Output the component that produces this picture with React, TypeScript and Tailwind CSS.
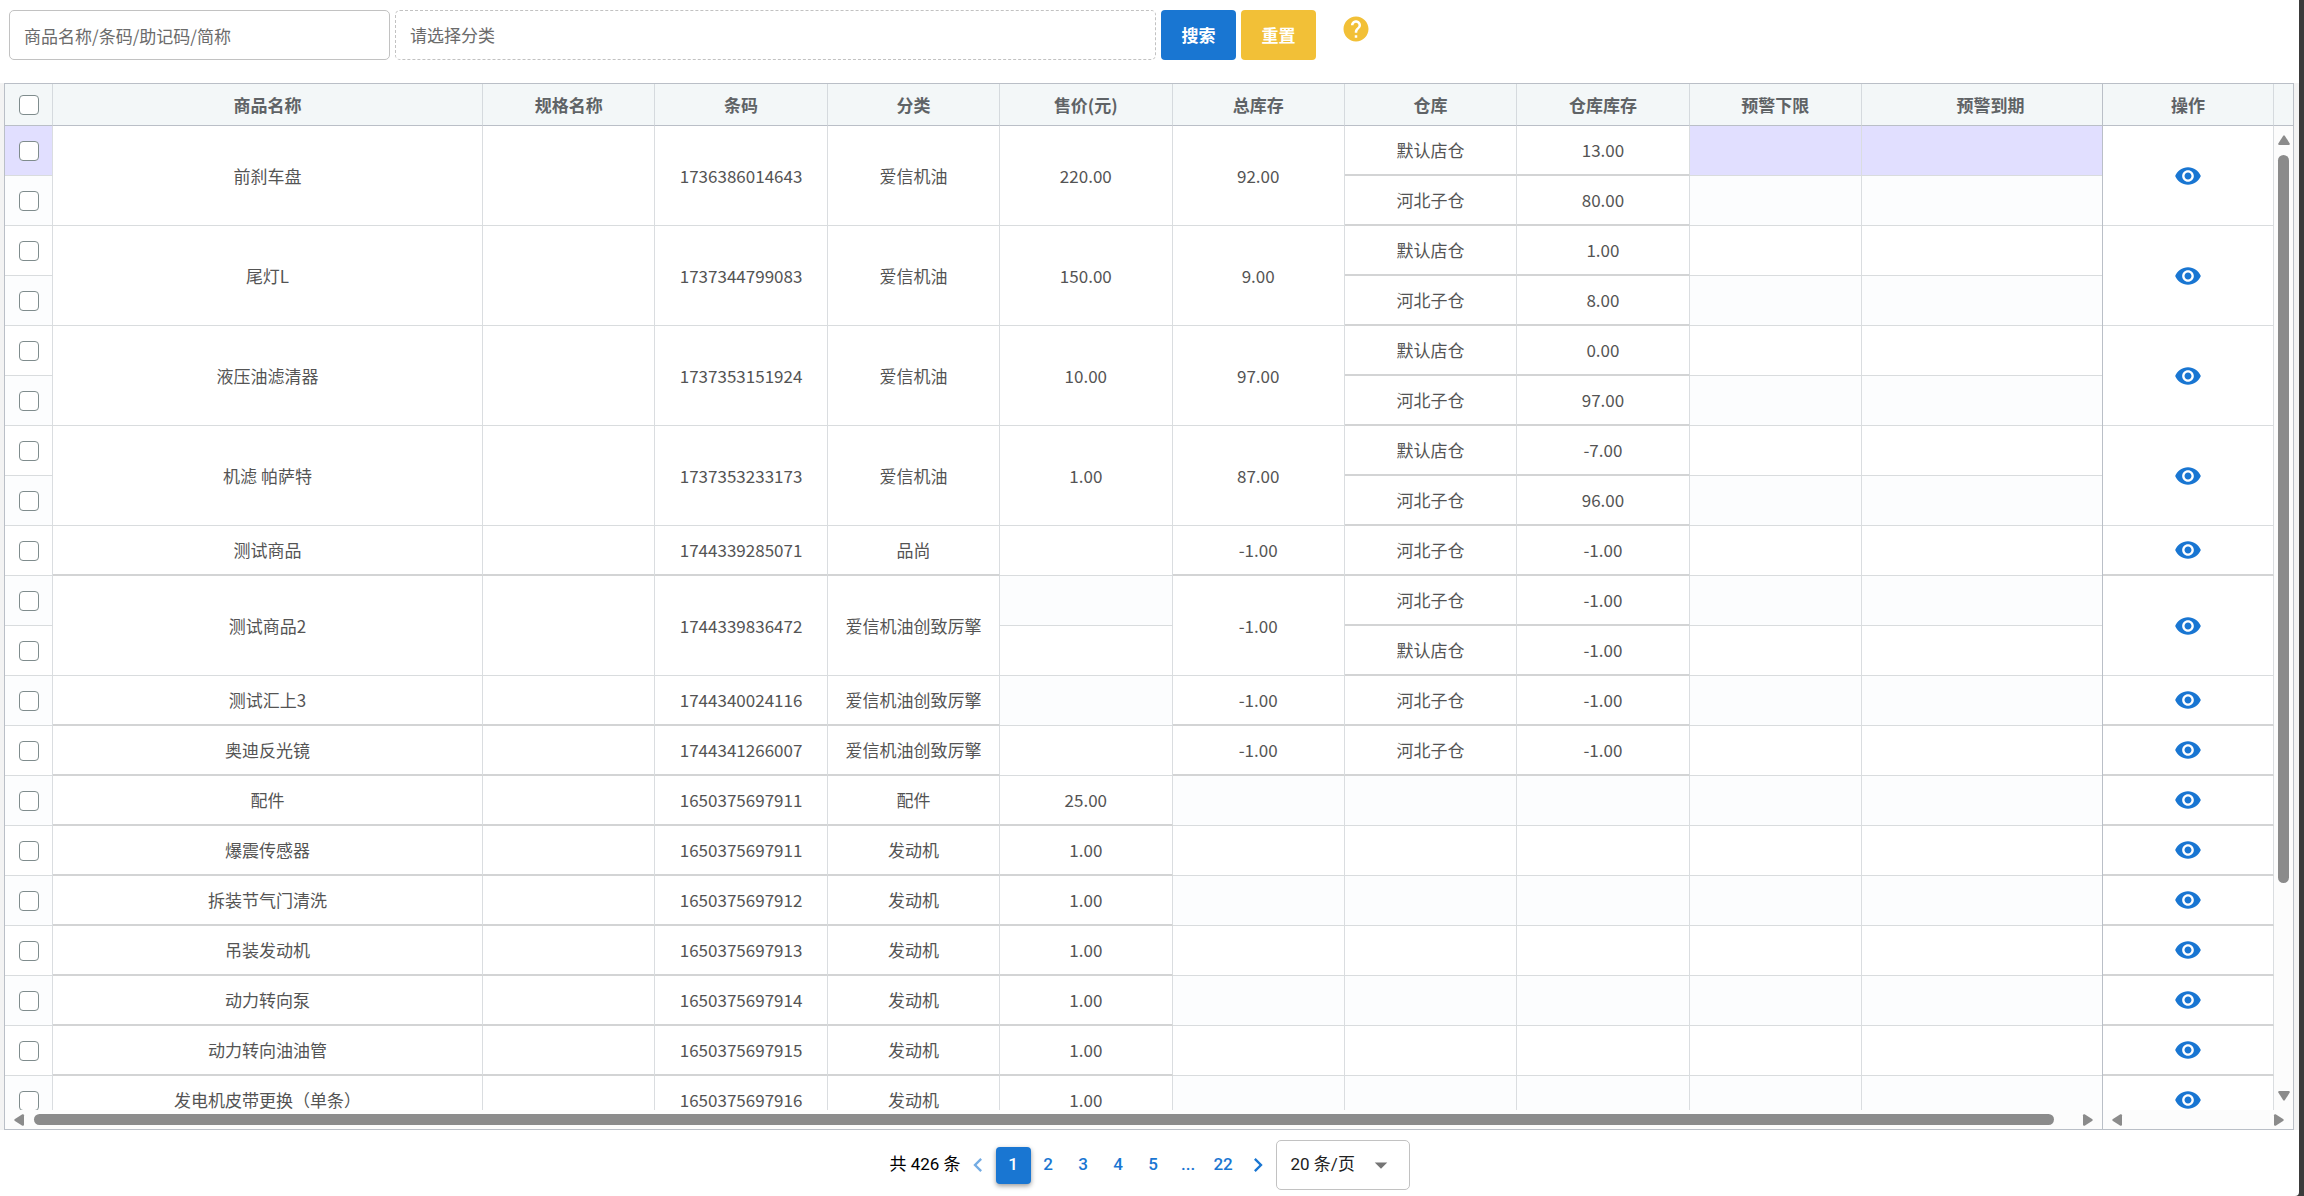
import clsx from "clsx";
import { MdHelp, MdVisibility, MdChevronLeft, MdChevronRight, MdArrowDropDown } from "react-icons/md";

type Stock = { name: string; qty: string };

type Product = {
  name: string;
  code: string;
  category: string;
  price?: string;
  total?: string;
  stocks: Stock[];
};

const MAIN = "默认店仓";
const SUB = "河北子仓";

const products: Product[] = [
  { name: "前刹车盘", code: "1736386014643", category: "爱信机油", price: "220.00", total: "92.00", stocks: [{ name: MAIN, qty: "13.00" }, { name: SUB, qty: "80.00" }] },
  { name: "尾灯L", code: "1737344799083", category: "爱信机油", price: "150.00", total: "9.00", stocks: [{ name: MAIN, qty: "1.00" }, { name: SUB, qty: "8.00" }] },
  { name: "液压油滤清器", code: "1737353151924", category: "爱信机油", price: "10.00", total: "97.00", stocks: [{ name: MAIN, qty: "0.00" }, { name: SUB, qty: "97.00" }] },
  { name: "机滤 帕萨特", code: "1737353233173", category: "爱信机油", price: "1.00", total: "87.00", stocks: [{ name: MAIN, qty: "-7.00" }, { name: SUB, qty: "96.00" }] },
  { name: "测试商品", code: "1744339285071", category: "品尚", total: "-1.00", stocks: [{ name: SUB, qty: "-1.00" }] },
  { name: "测试商品2", code: "1744339836472", category: "爱信机油创致厉擎", total: "-1.00", stocks: [{ name: SUB, qty: "-1.00" }, { name: MAIN, qty: "-1.00" }] },
  { name: "测试汇上3", code: "1744340024116", category: "爱信机油创致厉擎", total: "-1.00", stocks: [{ name: SUB, qty: "-1.00" }] },
  { name: "奥迪反光镜", code: "1744341266007", category: "爱信机油创致厉擎", total: "-1.00", stocks: [{ name: SUB, qty: "-1.00" }] },
  { name: "配件", code: "1650375697911", category: "配件", price: "25.00", stocks: [] },
  { name: "爆震传感器", code: "1650375697911", category: "发动机", price: "1.00", stocks: [] },
  { name: "拆装节气门清洗", code: "1650375697912", category: "发动机", price: "1.00", stocks: [] },
  { name: "吊装发动机", code: "1650375697913", category: "发动机", price: "1.00", stocks: [] },
  { name: "动力转向泵", code: "1650375697914", category: "发动机", price: "1.00", stocks: [] },
  { name: "动力转向油油管", code: "1650375697915", category: "发动机", price: "1.00", stocks: [] },
  { name: "发电机皮带更换（单条）", code: "1650375697916", category: "发动机", price: "1.00", stocks: [] },
];

// one line per warehouse; products without stock still take one line
const lines = products.flatMap((product) => {
  const span = Math.max(product.stocks.length, 1);
  return Array.from({ length: span }, (_, i) => ({ product, span, first: i === 0, stock: product.stocks[i] }));
});

const headers = ["商品名称", "规格名称", "条码", "分类", "售价(元)", "总库存", "仓库", "仓库库存", "预警下限", "预警到期"];
const pages = ["2", "3", "4", "5", "...", "22"];

function Cell({ value, span = 1, filled = true }: { value?: string; span?: number; filled?: boolean }) {
  return (
    <td
      rowSpan={span}
      className={clsx(
        "border-r border-r-[#dadde0] p-0 text-center whitespace-nowrap",
        filled && "bg-white",
        filled && span === 1 ? "border-b-2 border-b-[#d3d4d5]" : "border-b border-b-[#d9dcde]",
      )}
    >
      {value}
    </td>
  );
}

function HeadCell({ title }: { title: string }) {
  return <th className="border-r border-b border-r-[#d5dade] border-b-[#babfc7] p-0 font-bold">{title}</th>;
}

function Check({ label }: { label: string }) {
  return (
    <input
      type="checkbox"
      aria-label={label}
      className="block mx-auto size-5 appearance-none rounded-[4px] border border-[#7f8c8d] bg-white"
    />
  );
}

function Arrow({ className }: { className?: string }) {
  return (
    <svg viewBox="0 0 12 12" className={clsx("size-3 shrink-0 fill-[#8b8b8b]", className)}>
      <path d="M5.1 1.9Q6 .6 6.9 1.9L11.7 9.4Q12.2 10.8 10.8 11H1.2Q-.2 10.8.3 9.4Z" />
    </svg>
  );
}

function Toolbar() {
  return (
    <form className="flex items-start px-[9px] pt-[10px] pb-[23px]" onSubmit={(e) => e.preventDefault()}>
      <input
        type="text"
        aria-label="商品名称"
        placeholder="商品名称/条码/助记码/简称"
        className="h-[50px] w-[381px] rounded-[5px] border border-[#c2c2c2] px-[14px] text-[17px] placeholder:text-[#6b6b6b]"
      />
      <select
        aria-label="分类"
        className="ml-[5px] h-[50px] w-[761px] appearance-none rounded-[5px] border border-dashed border-[#c2c2c2] bg-white px-[14px] text-[17px] text-[#6b6b6b]"
      >
        <option>请选择分类</option>
      </select>
      <button className="ml-[5px] h-[50px] w-[75px] rounded-[4px] bg-[#1976d2] text-[17px] font-bold text-white">搜索</button>
      <button type="reset" className="ml-[5px] h-[50px] w-[75px] rounded-[4px] bg-[#f2c037] text-[17px] font-bold text-white">
        重置
      </button>
      <button type="button" aria-label="帮助" className="ml-[25px] mt-1">
        <MdHelp className="size-[30px] text-[#f2c037]" />
      </button>
    </form>
  );
}

function MainTable() {
  return (
    <table className="w-[calc(100%+18px)] table-fixed border-separate border-spacing-0">
      <colgroup>
        <col className="w-[48px]" />
        <col className="w-[430px]" />
        <col span={8} />
        <col className="w-[258px]" />
      </colgroup>
      <thead>
        <tr className="h-[42px] bg-[#f3f7f8] text-[#5f6366]">
          <th className="border-r border-b border-r-[#d5dade] border-b-[#babfc7] p-0">
            <Check label="全选" />
          </th>
          {headers.map((title) => (
            <HeadCell key={title} title={title} />
          ))}
        </tr>
      </thead>
      <tbody>
        {lines.map(({ product, span, first, stock }, i) => (
          <tr key={i} className={clsx("h-[50px]", i === 0 ? "bg-[#e1dfff]" : i % 2 ? "bg-[#fcfdfe]" : "bg-white")}>
            <td className="border-r border-b border-r-[#dadde0] border-b-[#d9dcde] p-0">
              <Check label={product.name} />
            </td>
            {first && (
              <>
                <Cell value={product.name} span={span} />
                <Cell span={span} />
                <Cell value={product.code} span={span} />
                <Cell value={product.category} span={span} />
              </>
            )}
            {product.price ? first && <Cell value={product.price} span={span} /> : <Cell filled={false} />}
            {product.total ? first && <Cell value={product.total} span={span} /> : <Cell filled={false} />}
            <Cell value={stock?.name} filled={!!stock} />
            <Cell value={stock?.qty} filled={!!stock} />
            <Cell filled={false} />
            <Cell filled={false} />
          </tr>
        ))}
      </tbody>
    </table>
  );
}

function ActionTable() {
  return (
    <table className="w-full table-fixed border-separate border-spacing-0">
      <thead>
        <tr className="h-[42px] bg-[#f3f7f8] text-[#5f6366]">
          <HeadCell title="操作" />
        </tr>
      </thead>
      <tbody>
        {lines.map(({ product, span, first }, i) => (
          <tr key={i} className="h-[50px]">
            {first && (
              <td
                rowSpan={span}
                className={clsx(
                  "border-r border-r-[#dadde0] p-0",
                  span === 1 ? "border-b-2 border-b-[#d3d4d5]" : "border-b border-b-[#d9dcde]",
                )}
              >
                <button aria-label={`查看${product.name}`} className="block mx-auto">
                  <MdVisibility className="size-7 text-[#1976d2]" />
                </button>
              </td>
            )}
          </tr>
        ))}
      </tbody>
    </table>
  );
}

function Grid() {
  return (
    <div className="flex min-h-0 flex-1 bg-[#f3f3f3] pr-[5px] pl-1">
      <div className="flex min-w-0 flex-1 border border-[#babfc7] bg-white text-[17px] text-[#545454]">
        <div className="flex min-w-0 flex-1 flex-col">
          <div className="min-h-0 flex-1 overflow-hidden">
            <MainTable />
          </div>
          <div className="flex h-[19px] shrink-0 items-center bg-[#fcfcfc] px-2">
            <Arrow className="-rotate-90" />
            <div className="mr-[28px] ml-[9px] h-[11px] flex-1 rounded-full bg-[#8b8b8b]" />
            <Arrow className="rotate-90" />
          </div>
        </div>

        <div className="flex w-[191px] shrink-0 flex-col border-l border-[#babfc7]">
          <div className="flex min-h-0 flex-1">
            <div className="min-w-0 flex-1 overflow-hidden">
              <ActionTable />
            </div>
            <div className="flex w-[19px] flex-col">
              <div className="h-[42px] shrink-0 border-b border-[#babfc7] bg-[#f3f7f8]" />
              <div className="flex min-h-0 flex-1 flex-col items-center bg-[#fcfcfc] py-2">
                <Arrow />
                <div className="mt-[9px] w-[11px] flex-[74] rounded-full bg-[#8b8b8b]" />
                <div className="flex-[21]" />
                <Arrow className="rotate-180" />
              </div>
            </div>
          </div>
          <div className="flex h-[19px] shrink-0 items-center justify-between bg-[#fcfcfc] px-2">
            <Arrow className="-rotate-90" />
            <Arrow className="rotate-90" />
          </div>
        </div>
      </div>
    </div>
  );
}

function Pagination() {
  return (
    <nav className="flex h-[66px] shrink-0 items-center justify-center pt-1 font-[Roboto,'Noto_Sans_CJK_SC',sans-serif] text-[17px] text-black">
      <span>共 426 条</span>
      <button aria-label="上一页" className="grid h-[37px] w-[35px] place-items-center text-[#1976d2] opacity-60">
        <MdChevronLeft className="size-7" />
      </button>
      <button className="h-[37px] w-[35px] rounded-[4px] bg-[#1976d2] font-medium text-white shadow-[0_2px_5px_rgba(0,0,0,0.4)]">1</button>
      {pages.map((page) => (
        <button key={page} className="h-[37px] w-[35px] font-medium text-[#1976d2]">
          {page}
        </button>
      ))}
      <button aria-label="下一页" className="grid h-[37px] w-[35px] place-items-center text-[#1976d2]">
        <MdChevronRight className="size-7" />
      </button>
      <div className="relative">
        <select aria-label="每页条数" className="block h-[50px] w-[134px] appearance-none rounded-[5px] border border-[#c2c2c2] bg-white px-[14px] text-[#212121]">
          <option>20 条/页</option>
        </select>
        <MdArrowDropDown className="pointer-events-none absolute top-[10px] right-[14px] size-[30px] text-[#757575]" />
      </div>
    </nav>
  );
}

export default function App() {
  return (
    <div className="flex h-screen bg-[#3b3b3b] pr-[5px] font-['Noto_Sans_CJK_SC','Noto_Sans',sans-serif]">
      <main className="flex min-w-0 flex-1 flex-col rounded-br-[4px] bg-white">
        <Toolbar />
        <Grid />
        <Pagination />
      </main>
    </div>
  );
}
